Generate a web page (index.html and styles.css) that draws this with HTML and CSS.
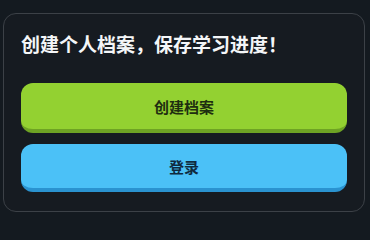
FILE: index.html
```html
<!DOCTYPE html>
<html lang="zh">
<head>
<meta charset="utf-8">
<link rel="stylesheet" href="styles.css">
</head>
<body>
<div class="page">
  <div class="card">
    <h2 class="title">创建个人档案，保存学习进度！</h2>
    <div class="actions">
      <button class="btn btn-green">创建档案</button>
      <button class="btn btn-blue">登录</button>
    </div>
  </div>
</div>
</body>
</html>
```
FILE: styles.css
```css
html, body {
  margin: 0;
  padding: 0;
  background: #141a20;
  width: 370px;
  height: 226px;
  overflow: hidden;
}
.page {
  padding: 13px 5px 0 3px;
  font-family: "Noto Sans CJK SC", "Noto Sans", sans-serif;
}
.card {
  box-sizing: border-box;
  width: 362px;
  height: 199px;
  border: 1.5px solid #3c4147;
  border-radius: 13px;
  background: #161b21;
  padding: 17px 17px 0 17px;
}
.title {
  margin: 0 0 26px 0;
  font-size: 19px;
  line-height: 26px;
  font-weight: 700;
  color: #f4f6f8;
  white-space: nowrap;
}
.actions {
  display: flex;
  flex-direction: column;
  gap: 11px;
}
.btn {
  box-sizing: border-box;
  width: 100%;
  border: none;
  border-radius: 12px;
  font-family: "Noto Sans CJK SC", "Noto Sans", sans-serif;
  font-size: 15px;
  font-weight: 700;
  padding: 0;
  cursor: pointer;
}
.btn-green {
  height: 50px;
  background: #93d131;
  border-bottom: 4px solid #6ea324;
  color: #1e2e10;
}
.btn-blue {
  height: 48px;
  background: #4bc1f7;
  border-bottom: 4px solid #2a93d0;
  color: #0f2a3e;
}
```
